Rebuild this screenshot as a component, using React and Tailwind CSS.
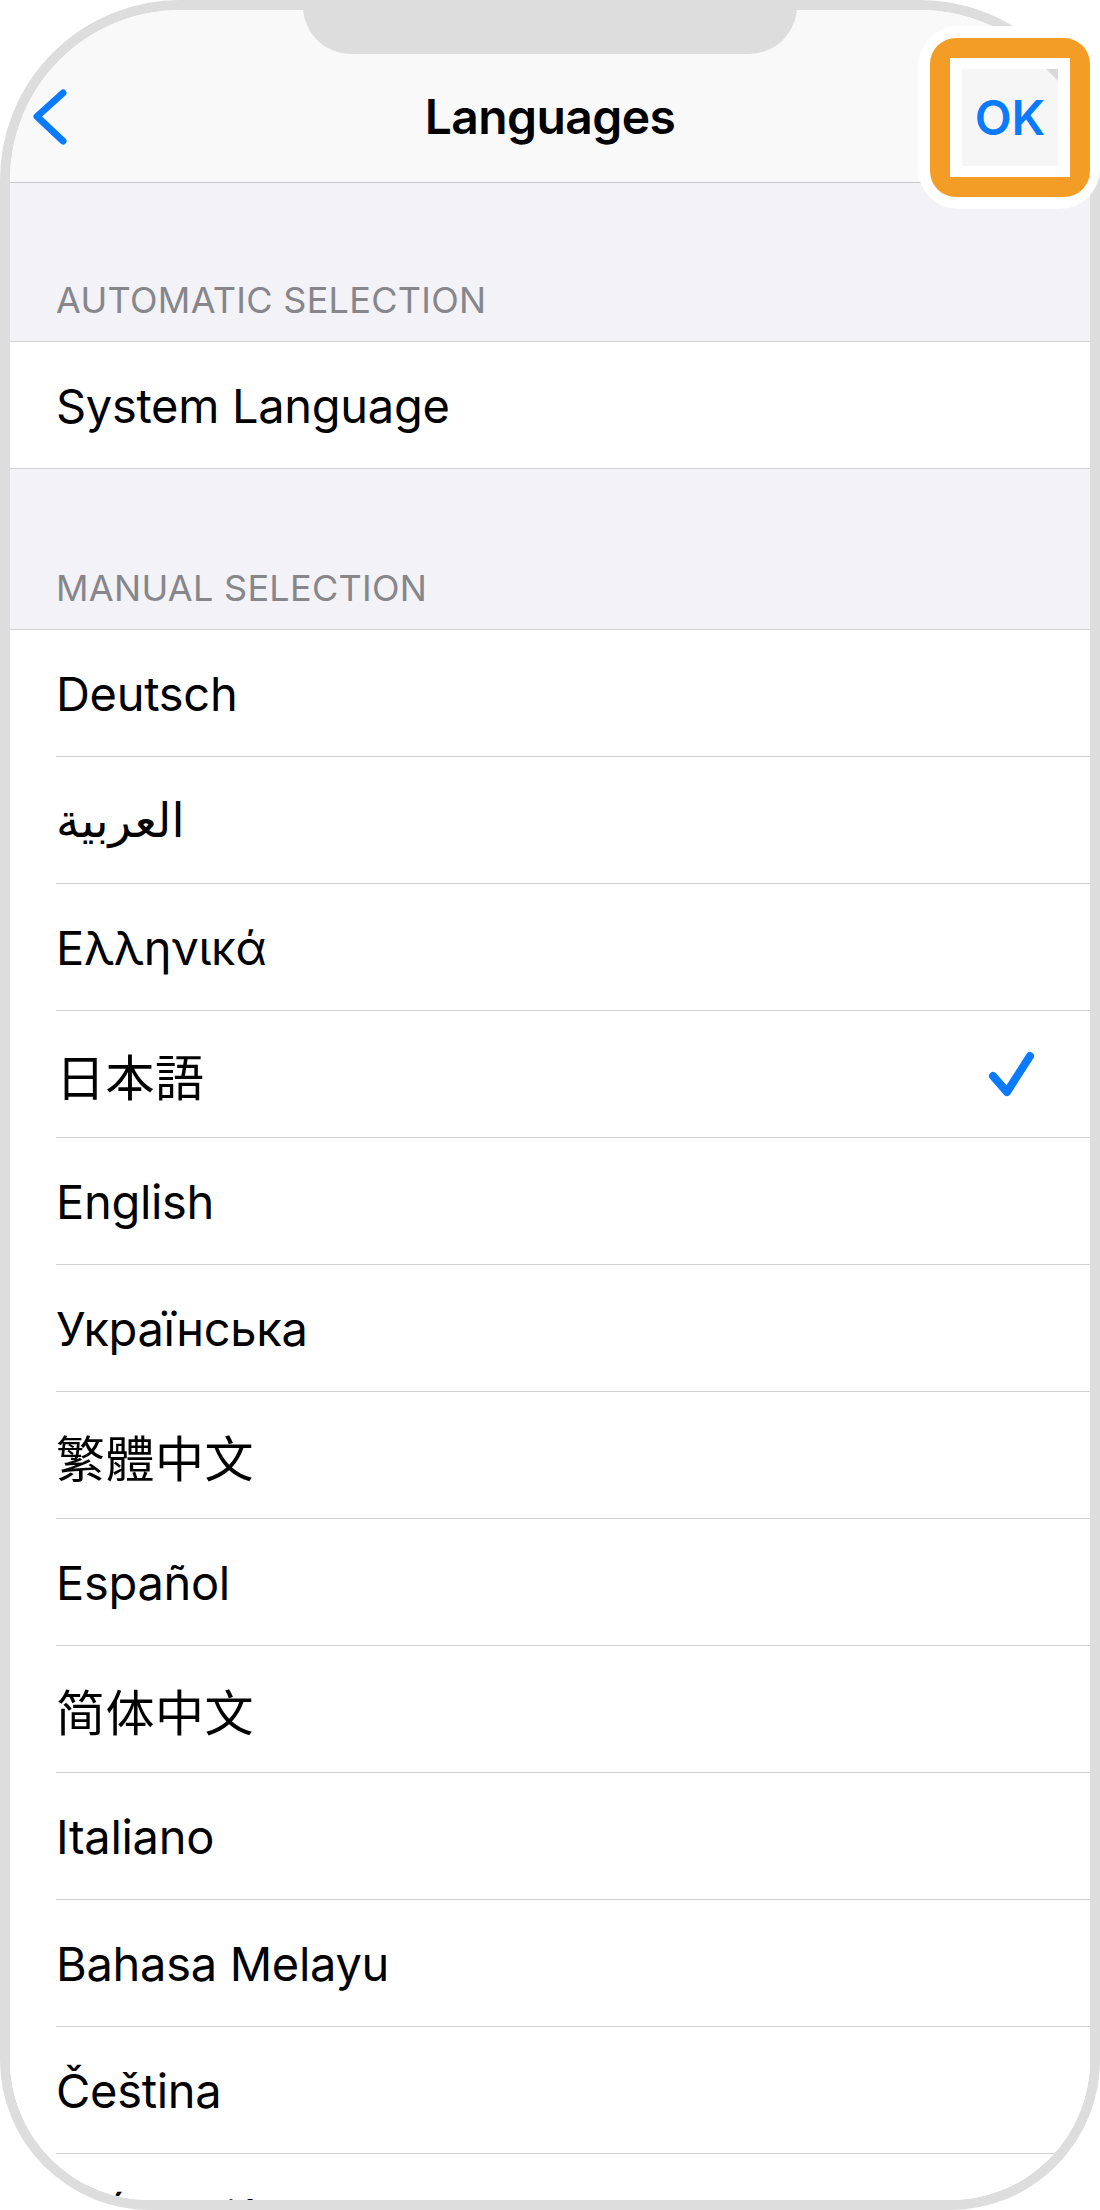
import React from 'react';

const languages = [
  { name: 'Deutsch' },
  { name: 'العربية', font: "'DejaVu Sans', 'Noto Sans', sans-serif" },
  { name: 'Ελληνικά' },
  { name: '日本語', font: "'Noto Sans CJK JP', sans-serif", cjk: true, selected: true },
  { name: 'English' },
  { name: 'Українська' },
  { name: '繁體中文', font: "'Noto Sans CJK TC', sans-serif", cjk: true },
  { name: 'Español' },
  { name: '简体中文', font: "'Noto Sans CJK SC', sans-serif", cjk: true },
  { name: 'Italiano' },
  { name: 'Bahasa Melayu' },
  { name: 'Čeština' },
  { name: 'Tiếng Việt' },
];

const Check = () => (
  <svg width="50" height="50" viewBox="0 0 50 50" fill="none">
    <path d="M7 27 L21 43 L44 7" stroke="#0a7aff" strokeWidth="8" strokeLinecap="round" strokeLinejoin="round" />
  </svg>
);

const SectionHeader = ({ children, height }) => (
  <div className={`${height} flex items-end px-[46px] pb-[23px] bg-[#f2f2f7]`}>
    <span className="text-[36px] leading-none text-[#86868b] tracking-[0.3px]">{children}</span>
  </div>
);

const Row = ({ item, last }) => (
  <div className="bg-white pl-[46px]">
    <div className={`h-[127px] flex items-center pr-[54px] ${last ? '' : 'border-b border-[#d1d1d6]'}`}>
      <span
        className={`${item.cjk ? 'text-[49px] tracking-[0.5px]' : 'text-[47px] tracking-[-0.3px]'} leading-none text-black`}
        style={item.font ? { fontFamily: item.font } : undefined}
      >
        {item.name}
      </span>
      {item.selected && (
        <div className="ml-auto">
          <Check />
        </div>
      )}
    </div>
  </div>
);

export default function App() {
  return (
    <div className="relative w-[1100px] h-[2210px] bg-white" style={{ fontFamily: "Inter, 'Noto Sans', sans-serif" }}>
      {/* phone frame */}
      <div className="h-full border-[10px] border-[#dddddd] rounded-t-[180px] rounded-b-[150px] overflow-hidden bg-white">
        {/* nav bar */}
        <div className="h-[173px] pt-[42px] bg-[#f9f9f9] border-b border-[#c6c6c8]">
          <div className="h-[130px] grid grid-cols-[1fr_auto_1fr] items-center">
            <div className="pl-[20px]">
              <svg width="40" height="56" viewBox="0 0 40 56" fill="none">
                <path d="M33 4 L7 27.5 L33 52" stroke="#0a7aff" strokeWidth="7" strokeLinecap="round" strokeLinejoin="round" />
              </svg>
            </div>
            <div className="text-[48px] font-semibold leading-none text-black tracking-[-0.6px]">Languages</div>
            <div />
          </div>
        </div>

        <SectionHeader height="h-[158px]">AUTOMATIC SELECTION</SectionHeader>
        <div className="border-y border-[#d1d1d6] bg-white">
          <div className="h-[126px] flex items-center px-[46px]">
            <span className="text-[47px] leading-none text-black tracking-[-0.3px]">System Language</span>
          </div>
        </div>

        <SectionHeader height="h-[160px]">MANUAL SELECTION</SectionHeader>
        <div className="border-t border-[#d1d1d6] bg-white">
          {languages.map((item, i) => (
            <Row key={item.name} item={item} last={i === languages.length - 1} />
          ))}
        </div>
      </div>

      {/* notch */}
      <div className="absolute left-[303px] top-0 w-[494px] h-[54px] bg-[#dddddd] rounded-b-[48px]" />

      {/* highlighted OK button */}
      <div className="absolute left-[918px] top-[26px] w-[182px] h-[183px] rounded-[40px] bg-white flex items-center pl-[12px]">
        <div className="w-[160px] h-[159px] rounded-[26px] bg-[#f39c26] p-[20px]">
          <div className="w-full h-full bg-white flex items-center justify-center">
            <div className="relative w-[96px] h-[97px] bg-[#f6f6f6] flex items-center justify-center">
              <div className="absolute right-0 top-0 w-0 h-0 border-l-[12px] border-l-transparent border-t-[12px] border-t-[#d9d9d9]" />
              <span className="text-[48px] font-semibold leading-none text-[#0a7aff]">OK</span>
            </div>
          </div>
        </div>
      </div>
    </div>
  );
}
